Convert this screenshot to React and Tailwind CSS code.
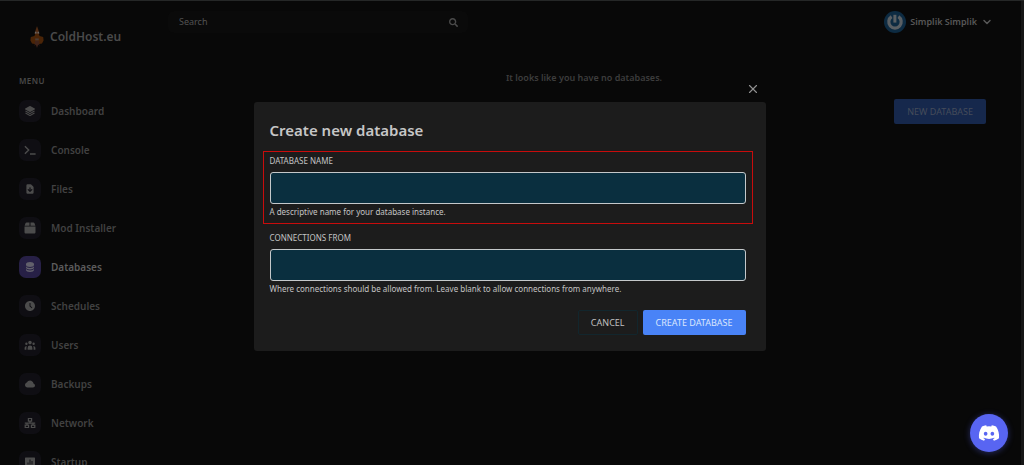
import React from "react";
import {
  BiSolidCloud,
  BiSolidData,
  BiSolidLayer,
  BiSolidTimeFive,
} from "react-icons/bi";
import { FaDiscord, FaSearch } from "react-icons/fa";
import { HiDocumentDownload, HiUserGroup } from "react-icons/hi";
import { RiBarChartBoxFill } from "react-icons/ri";
import { ChevronDown, X } from "lucide-react";

const TerminalIcon = () => (
  <svg viewBox="0 0 12 12" fill="none" stroke="currentColor" strokeWidth="1.4" width="1em" height="1em">
    <path d="m.9 2.2 3.8 3.8L.9 9.8M6 10h5.6" />
  </svg>
);

const BoxIcon = () => (
  <svg viewBox="0 0 12 12" fill="currentColor" width="1em" height="1em">
    <path d="M2.6.5h2.9v3.2H.6l.9-2.5C1.7.7 2.1.5 2.6.5Zm3.9 0h2.9c.5 0 .9.2 1.1.7l.9 2.5H6.5V.5ZM.5 4.6h11v5.6c0 .8-.6 1.3-1.3 1.3H1.8c-.7 0-1.3-.5-1.3-1.3V4.6Z" />
  </svg>
);

const NetworkIcon = () => (
  <svg viewBox="0 0 12 12" fill="none" stroke="currentColor" strokeWidth="1.2" width="1em" height="1em">
    <path d="M4.4 1.5h3.2v2.6H4.4ZM1.2 8.1h3.4v2.4H1.2ZM7.4 8.1h3.4v2.4H7.4ZM6 4v2M.8 6.1h10.4M3 6v2M9 6v2" />
  </svg>
);

const menuItems = [
  { label: "Dashboard", path: "#dashboard", icon: BiSolidLayer },
  { label: "Console", path: "#console", icon: TerminalIcon },
  { label: "Files", path: "#files", icon: HiDocumentDownload },
  { label: "Mod Installer", path: "#mods", icon: BoxIcon },
  { label: "Databases", path: "#databases", icon: BiSolidData, active: true },
  { label: "Schedules", path: "#schedules", icon: BiSolidTimeFive },
  { label: "Users", path: "#users", icon: HiUserGroup },
  { label: "Backups", path: "#backups", icon: BiSolidCloud },
  { label: "Network", path: "#network", icon: NetworkIcon },
  { label: "Startup", path: "#startup", icon: RiBarChartBoxFill },
];

const Logo = () => (
  <svg viewBox="0 0 14 22" className="h-[22px] w-[14px]">
    <path d="M7 0 8.2 3.5 9.4 8H4.6l1.2-4.5Z" fill="#4f2a12" />
    <path d="M4.9 5.8h1.6v1.8H4.9ZM7.5 5.8h1.6v1.8H7.5Z" fill="#6a6664" />
    <path d="M.8 11 4.4 10l.8-2h3.6l.8 2 3.6 1 .4 3.6L12 17.5 9.4 18H4.6L2 17.5.4 14.6Z" fill="#4a2407" />
    <path d="M5.2 12.4h3.6v2H5.2Z" fill="#493c35" />
    <path d="M5 15h4l.4 5-1.2-1.6L7 22l-1.2-3.6L4.6 20Z" fill="#40241a" />
  </svg>
);

const Sidebar = () => (
  <aside className="w-40 shrink-0 pl-[19px]">
    <a href="#home" className="mt-[25px] flex items-center gap-[6px] pl-[11px]">
      <Logo />
      <span className="text-[12px] leading-[22px] font-semibold text-[#4a4a4a]">ColdHost.eu</span>
    </a>
    <p className="mt-[27px] text-[8px] leading-[12px] font-semibold tracking-wider text-[#484848]">MENU</p>
    <nav className="mt-[13px] flex flex-col gap-[17px]">
      {menuItems.map(({ label, path, icon: Icon, active }) => (
        <a
          key={label}
          href={path}
          className={`flex h-[22px] items-center gap-[10px] text-[10px] leading-[14px] font-semibold ${
            active ? "text-[#5c5c5c]" : "text-[#414141]"
          }`}
        >
          <span
            className={`flex size-[22px] items-center justify-center rounded-[7px] text-[12px] ${
              active ? "bg-[#272046] text-[#62606c]" : "bg-[#0f0e13] text-[#4c4c4c]"
            }`}
          >
            <Icon />
          </span>
          {label}
        </a>
      ))}
    </nav>
  </aside>
);

const Header = () => (
  <header className="flex items-center justify-between">
    <label className="flex h-[22px] w-[300px] items-center rounded-md bg-[#0a0a0a] pr-[10px] pl-[11px] text-[#4a4a4a]">
      <input
        type="text"
        aria-label="Search"
        placeholder="Search"
        className="min-w-0 flex-1 bg-transparent text-[9px] outline-none placeholder:text-[#525252]"
      />
      <FaSearch className="text-[9px]" />
    </label>
    <button type="button" className="flex items-center gap-1 text-[9px] font-semibold text-[#575757]">
      <svg viewBox="0 0 22 22" className="size-[22px]">
        <circle cx="11" cy="11" r="11" fill="#0d2b42" />
        <path d="M7.6 5.7A6.2 6.2 0 1 0 14.4 5.7" fill="none" stroke="#5a5f63" strokeWidth="3.2" />
        <path d="M10.9 3.8v7.8" fill="none" stroke="#5a5f63" strokeWidth="3" />
      </svg>
      Simplik Simplik
      <ChevronDown className="size-3" strokeWidth={3} />
    </button>
  </header>
);

const Field = ({ id, label, hint, className = "" }) => (
  <div className={className}>
    <label htmlFor={id} className="block text-[8px] leading-[12px] text-[#c4c4c4] uppercase">
      {label}
    </label>
    <input
      id={id}
      type="text"
      className="mt-[5px] block h-8 w-full rounded-[3px] border border-[#c4c8ca] bg-[#0a2f3f] px-3 text-[10px] text-gray-200 outline-none"
    />
    <p className="mt-[2px] text-[8px] leading-[12px] text-[#c4c4c4]">{hint}</p>
  </div>
);

const CreateDatabaseModal = () => (
  <div className="absolute inset-0 flex justify-center pt-[101px] pr-[5px]">
    <div
      role="dialog"
      aria-labelledby="modal-title"
      className="relative w-full max-w-lg self-start rounded-[3px] bg-[#1c1c1c] py-4 pr-5 pl-4"
    >
      <button type="button" aria-label="Close" className="absolute -top-5 right-[6px] text-[#8f8f8f]">
        <X className="size-[14px]" strokeWidth={2} />
      </button>
      <h2 id="modal-title" className="text-[15px] leading-6 font-semibold text-[#c6c6c6]">
        Create new database
      </h2>
      <form>
        <div className="-mx-[7px] mt-[9px] border border-[#c80c0c] px-[6px] pt-[3px] pb-[5px]">
          <Field id="db-name" label="Database name" hint="A descriptive name for your database instance." />
        </div>
        <Field
          id="db-from"
          className="mt-2"
          label="Connections from"
          hint="Where connections should be allowed from. Leave blank to allow connections from anywhere."
        />
        <div className="mt-[15px] flex justify-end gap-[5px] text-[9px]">
          <button type="button" className="h-[25px] rounded-[2px] border border-[#12262d] px-3 text-[#c0c0c0]">
            CANCEL
          </button>
          <button type="submit" className="h-[25px] rounded-[2px] bg-[#4983f7] px-[13px] text-[#dbe6fd]">
            CREATE DATABASE
          </button>
        </div>
      </form>
    </div>
  </div>
);

const App = () => (
  <div className="relative h-screen overflow-hidden border-t border-[#252727] bg-[#080808] font-['Noto_Sans','Open_Sans',sans-serif]">
    <div className="flex h-full border-r-[3px] border-[#161616]">
      <Sidebar />
      <main className="flex-1 pt-[10px] pr-[28px] pl-2">
        <Header />
        <div className="pr-[7px] pl-[14px]">
          <p className="mt-[37px] text-center text-[9px] leading-[15px] font-semibold text-[#3d3d3d]">
            It looks like you have no databases.
          </p>
          <div className="mt-[14px] flex justify-end">
            <button type="button" className="h-[25px] rounded-[2px] bg-[#16284c] px-[13px] text-[9px] text-[#454c5a]">
              NEW DATABASE
            </button>
          </div>
        </div>
      </main>
    </div>
    <CreateDatabaseModal />
    <button
      type="button"
      aria-label="Discord"
      className="absolute right-4 bottom-[13px] flex size-[38px] items-center justify-center rounded-full bg-[#5865f2] text-[22px] text-white shadow-[0_1px_6px_#5865f266]"
    >
      <FaDiscord />
    </button>
  </div>
);

export default App;
